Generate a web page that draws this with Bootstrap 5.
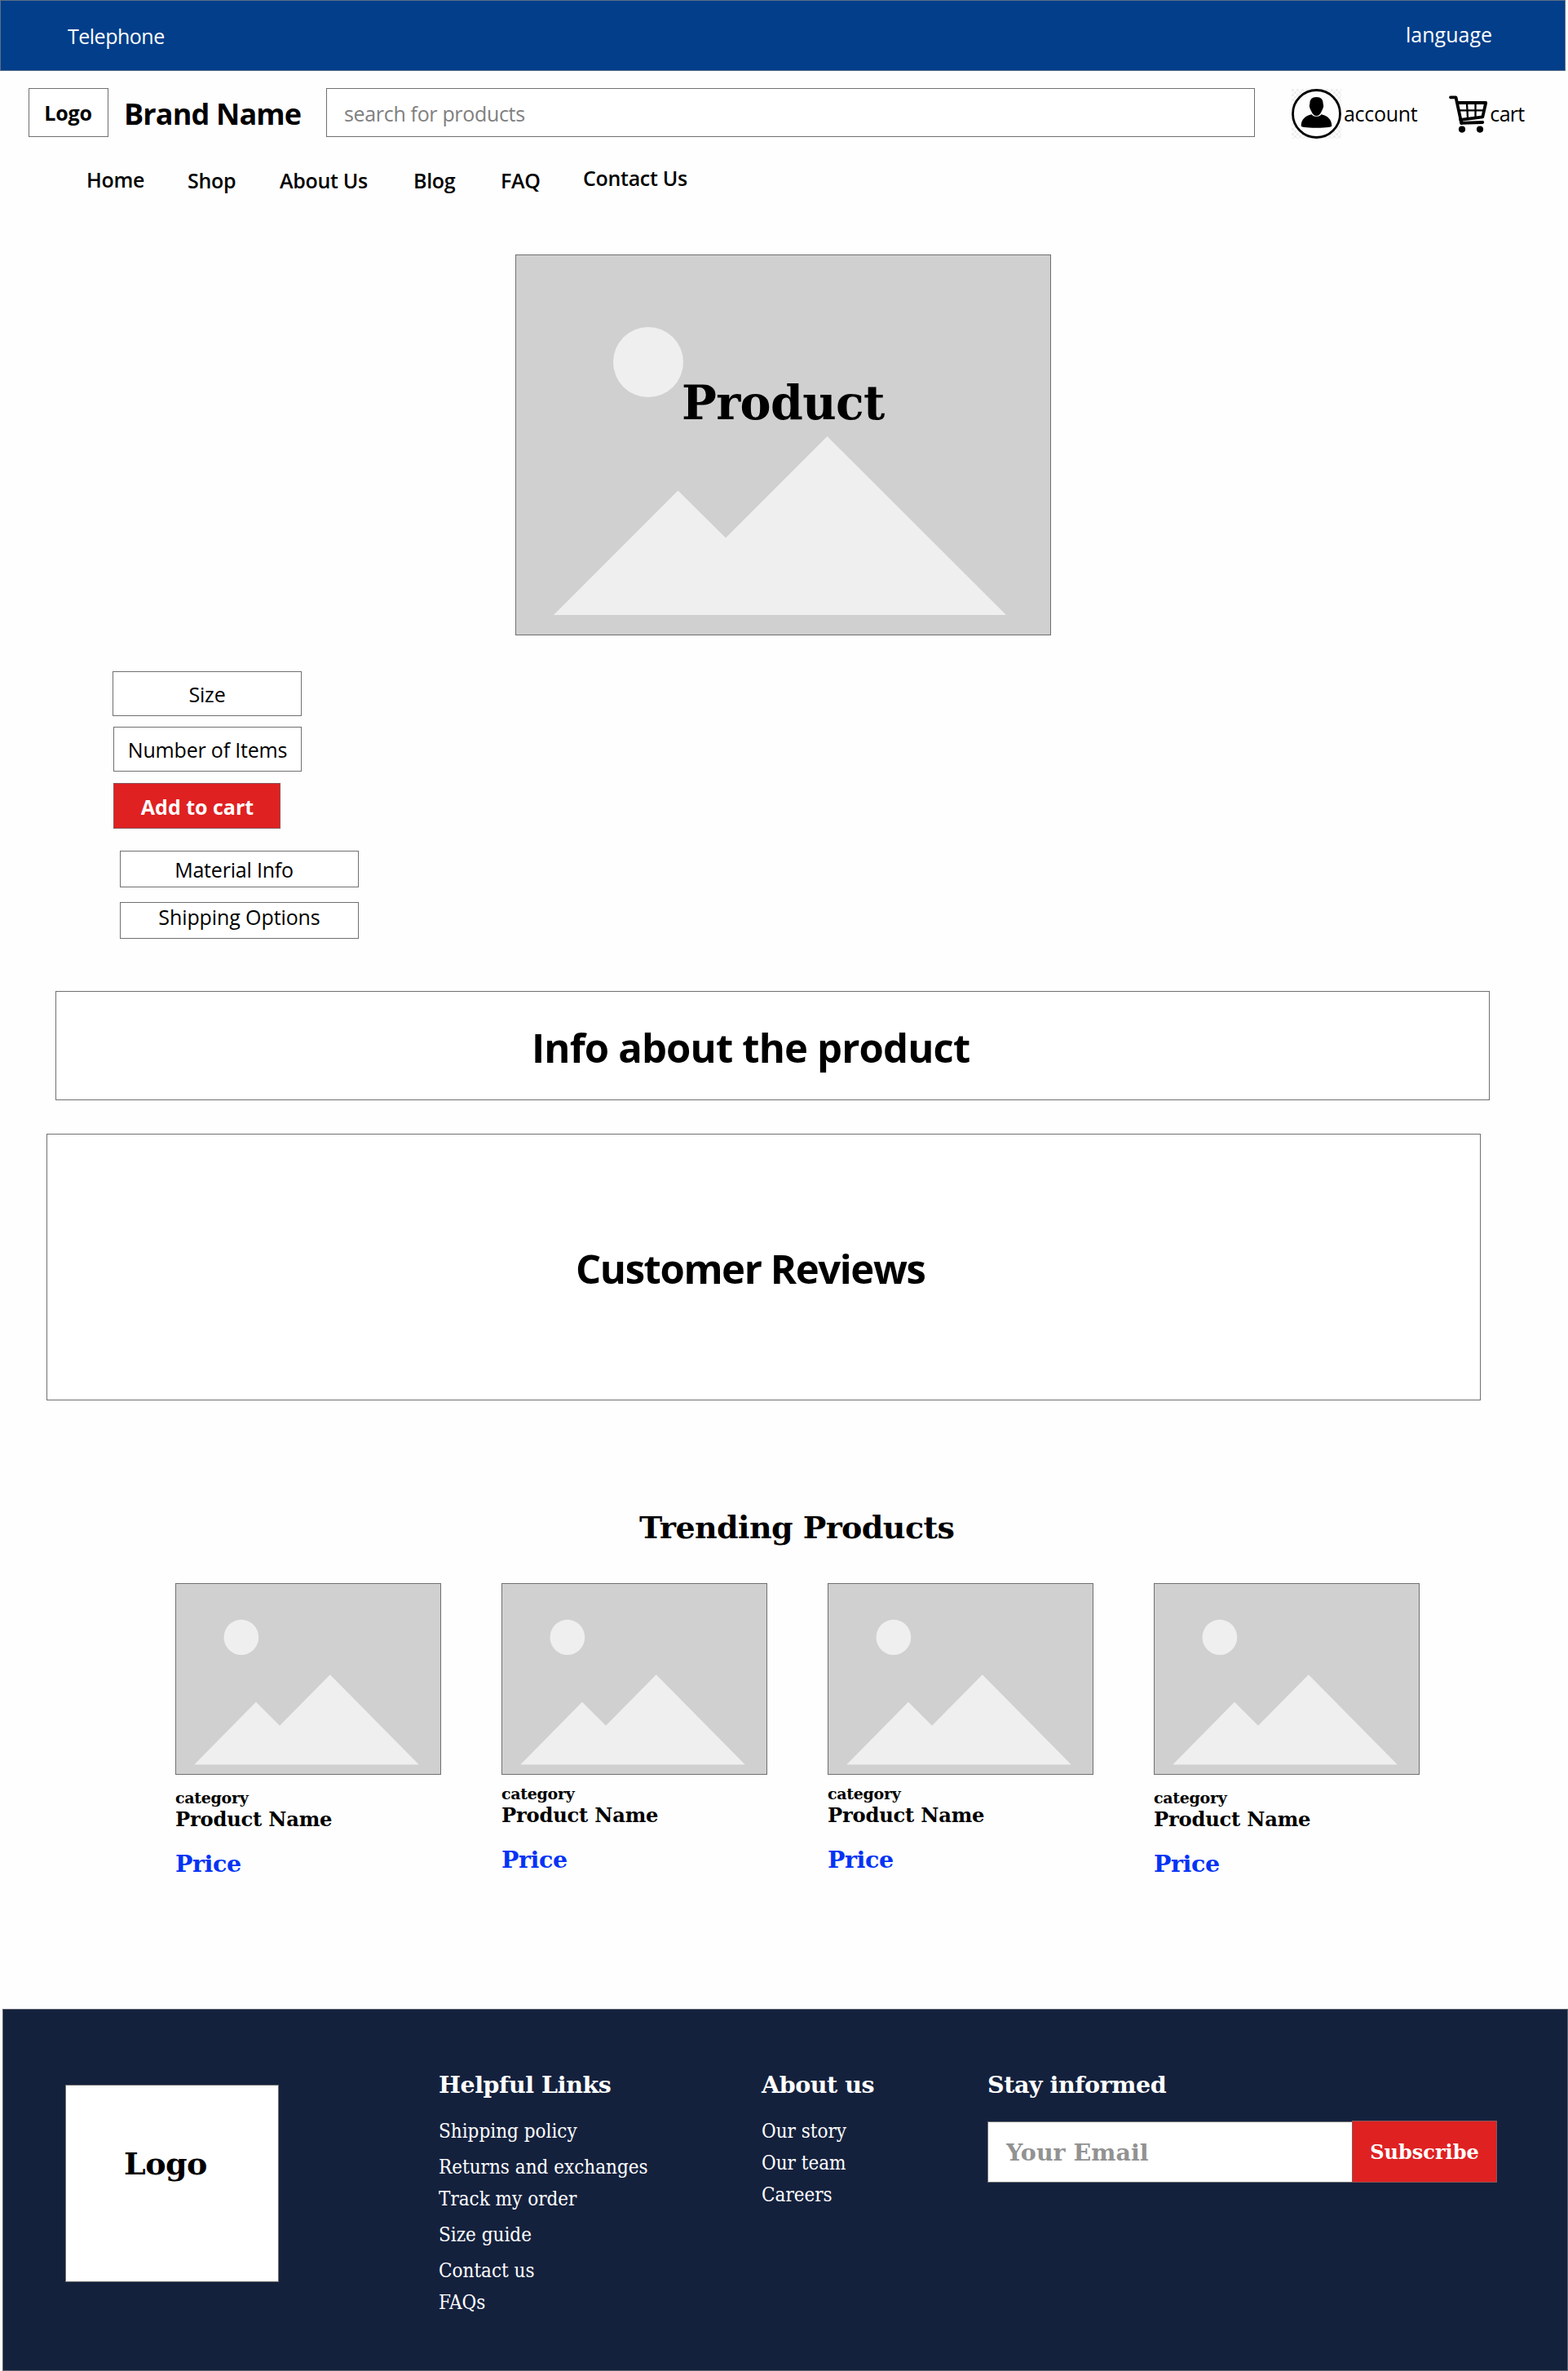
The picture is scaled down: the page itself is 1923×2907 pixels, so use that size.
<!DOCTYPE html>
<html lang="en">
<head>
<meta charset="utf-8">
<meta name="viewport" content="width=device-width, initial-scale=1">
<title>Product page</title>
<link href="https://cdn.jsdelivr.net/npm/bootstrap@5.3.0/dist/css/bootstrap.min.css" rel="stylesheet">
<style>
  :root { --line: #707070; --ui: "Open Sans", "Noto Sans", sans-serif; --display: "DejaVu Serif", Georgia, serif; }
  body { background: #fefefe; color: #000; font: 400 25px/30px var(--ui); letter-spacing: -.2px; white-space: nowrap; overflow-x: hidden; }
  .outlined { border: 1px solid var(--line); background: #fff; }
  .serif { font-family: var(--display); font-weight: 700; letter-spacing: -.015em; }

  .top-strip { width: 1920px; height: 87px; background: #023e8a; border: 1px solid #5b6f86; color: #fff; padding: 26px 89px 0 82px; }
  .top-strip .phone { margin-top: 2px; letter-spacing: -.5px; }
  .top-strip .lang { letter-spacing: 0; }

  .masthead { padding: 21px 0 0 35px; height: 81px; }
  .logo-sm { width: 98px; height: 60px; padding-right: 1px; }
  .brand { width: 267px; padding: 3px 0 0 19px; font-size: 36px; line-height: 40px; letter-spacing: -.85px; }
  .search-field { width: 1139px; height: 60px; padding: 2px 21px 0; color: #707070; font-size: 25px; line-height: 30px; font-family: var(--ui); letter-spacing: -.33px; border-radius: 0; }
  .search-field::placeholder { color: #808080; opacity: 1; }
  .account-link { margin-left: 45px; }
  .account-link svg { margin-top: 3px; }
  .account-link span { margin: 2px 0 0 3px; letter-spacing: -.3px; }
  .cart-link { margin-left: 39px; }
  .cart-link svg { margin-top: 3px; }
  .cart-link span { margin: 2px 0 0 2px; letter-spacing: -.7px; }

  .main-nav { height: 144px; padding: 35px 0 0 106px; display: grid; grid-template-columns: 124px 113px 164px 107px 101px 140px; font-weight: 600; }
  .main-nav a { color: #000; text-decoration: none; margin-top: 3px; letter-spacing: -.3px; }
  .main-nav a:first-child { margin-top: 2px; }
  .main-nav a:last-child { margin-top: 0; }

  .hero-pic { width: 657px; height: 467px; margin-left: 632px; }
  .hero-pic svg, .thumb svg { display: block; width: 100%; height: 100%; }
  .hero-title { top: 150px; left: 204px; font-size: 57px; line-height: 64px; letter-spacing: -.65px; }

  .buy-box { padding: 44px 0 0 138px; }
  .field { height: 55px; width: 232px; padding-top: 1px; display: flex; align-items: center; justify-content: center; }
  .qty { margin: 13px 0 0 1px; width: 231px; }
  .add-btn { margin: 14px 0 0 1px; width: 205px; height: 56px; background: #df2122; border: 1px solid #8a5558; color: #fff; font-weight: 700; letter-spacing: 0; border-radius: 0; padding: 2px 0 0 1px; font-size: 25px; line-height: 30px; }
  .detail { width: 293px; height: 45px; margin-left: 9px; padding-right: 13px; }
  .material { margin-top: 27px; }
  .shipping { margin-top: 18px; padding: 0 0 9px; letter-spacing: -.1px; }

  .panel { width: 1759px; font-weight: 700; font-size: 49px; line-height: 60px; display: flex; align-items: center; }
  .info-panel { margin: 64px 0 0 68px; height: 134px; padding: 4px 0 0 583px; letter-spacing: -.85px; }
  .review-panel { margin: 41px 0 0 57px; height: 327px; padding: 2px 0 0 648px; letter-spacing: -1.4px; }

  .trending { height: 746px; padding-top: 131px; }
  .trending h2 { margin: 0 0 43px 784px; font-size: 38px; line-height: 50px; }
  .product-grid { padding-left: 215px; gap: 74px; }
  .product-item { width: 326px; }
  .thumb { height: 235px; }
  .cat { margin-top: 11px; font-size: 19px; line-height: 24px; }
  .low .cat { margin-top: 16px; }
  .pname { font-size: 24.2px; line-height: 28px; letter-spacing: -.2px; padding-top: 1px; }
  .cost { margin-top: 22px; font-size: 28.5px; line-height: 36px; color: #0433f5; }

  .site-footer { margin-left: 3px; height: 444px; background: #14213d; border: 1px solid #5d636e; color: #fff; }
  .logo-lg { width: 262px; height: 242px; margin: 92px 0 0 76px; padding: 71px 0 0 71px; color: #000; font-size: 38px; line-height: 50px; }
  .site-footer h3 { margin: 74px 0 24px; font-size: 28.5px; line-height: 36px; }
  .links-col { width: 396px; margin-left: 196px; }
  .about-col { width: 277px; }
  .foot-list { font: 400 24px/30px "DejaVu Serif Condensed", "DejaVu Serif", Georgia, serif; font-stretch: condensed; letter-spacing: 0; margin: 0; padding: 0; list-style: none; }
  .foot-list li + li { margin-top: 9px; }
  .foot-list li.gap-lg { margin-top: 14px; }
  .email-field { width: 448px; height: 75px; padding: 0 22px; border-radius: 0; font-size: 28.5px; letter-spacing: 0; }
  .email-field::placeholder { color: #929292; opacity: 1; }
  .sub-btn { width: 178px; height: 76px; margin-left: -1px; padding: 2px 0 0; background: #df2122; border: 1px solid #8a5558; color: #fff; font-size: 24px; line-height: 30px; border-radius: 0; letter-spacing: 0; }
  .signup { margin-top: 26px; }
</style>
</head>
<body>

<!-- Placeholder artwork shared by the hero and the product cards -->
<svg class="d-none" aria-hidden="true">
  <symbol id="placeholder" viewBox="0 0 657 467" preserveAspectRatio="none">
    <rect width="657" height="467" fill="#d0d0d0"/>
    <circle cx="163" cy="132" r="43" fill="#efefef"/>
    <path d="M47 442 199.5 289.5 258 347.5 382.5 223 602 442z" fill="#efefef"/>
    <rect x="0" y="0" width="657" height="467" fill="none" stroke="#707070" stroke-width="2" vector-effect="non-scaling-stroke"/>
  </symbol>
</svg>

<div class="top-strip d-flex justify-content-between align-items-start">
  <span class="phone">Telephone</span>
  <span class="lang">language</span>
</div>

<header>
  <div class="masthead d-flex align-items-center">
    <div class="logo-sm outlined d-flex align-items-center justify-content-center fw-bold">Logo</div>
    <div class="brand fw-bold">Brand Name</div>
    <input class="search-field outlined" type="text" placeholder="search for products" aria-label="Search">
    <div class="account-link d-flex align-items-center">
      <svg width="61" height="61" viewBox="0 0 61 61" role="img" aria-label="Account">
        <defs>
          <pattern id="chk" width="6" height="6" patternUnits="userSpaceOnUse"><path d="M0 0h3v3H0zM3 3h3v3H3z" fill="#efefef"/></pattern>
        </defs>
        <rect width="61" height="61" fill="url(#chk)"/>
        <circle cx="30.5" cy="30.5" r="29" fill="#fdfdfd" stroke="#000" stroke-width="2.8"/>
        <path d="M30.5 10C25 10 22.4 13 22.4 17.500C22.400 19 21.500 19.500 22 22C22.600 25 23.500 25.500 24.500 28C26 31.500 28 33 30.500 33C33 33 35 31.500 36.500 28C37.500 25.500 38.400 25 39 22C39.500 19.500 38.600 19 38.600 17.500C38.600 13 36 10 30.500 10z"/>
        <path d="M24.500 31.200C26.500 34.600 34.500 34.600 36.500 31.200C44 33 49.300 37 49.300 45.500C49.300 46.600 44 47.700 30.500 47.700S11.700 46.600 11.700 45.500C11.700 37 17 33 24.500 31.200z"/>
      </svg>
      <span>account</span>
    </div>
    <div class="cart-link d-flex align-items-center">
      <svg width="48" height="46" viewBox="0 0 48 46" fill="none" stroke="#000" stroke-linejoin="round" stroke-linecap="round" role="img" aria-label="Cart">
        <path d="M2 2.300H8.500L15.300 33.800 41.300 33" stroke-width="3.800"/>
        <path d="M10.500 9H45.200L41.300 26.300 14.500 29.800" stroke-width="3.800"/>
        <path d="M13 18.300H43M22 9.500 23 28M32.500 9.500V26.500" stroke-width="2.300"/>
        <path d="M14.500 29.500 15.500 34" stroke-width="4"/>
        <circle cx="16" cy="41.600" r="4.100" fill="#000" stroke="none"/>
        <circle cx="38" cy="41.600" r="4.100" fill="#000" stroke="none"/>
      </svg>
      <span>cart</span>
    </div>
  </div>

  <nav class="main-nav">
    <a href="#">Home</a>
    <a href="#">Shop</a>
    <a href="#">About Us</a>
    <a href="#">Blog</a>
    <a href="#">FAQ</a>
    <a href="#">Contact Us</a>
  </nav>
</header>

<main>
  <section class="hero-pic position-relative">
    <svg><use href="#placeholder"/></svg>
    <h1 class="hero-title serif position-absolute m-0">Product</h1>
  </section>

  <section class="buy-box">
    <div class="field outlined">Size</div>
    <div class="field outlined qty">Number of Items</div>
    <button class="btn add-btn d-block" type="button">Add to cart</button>
    <div class="field outlined detail material">Material Info</div>
    <div class="field outlined detail shipping">Shipping Options</div>
  </section>

  <section class="panel outlined info-panel">Info about the product</section>
  <section class="panel outlined review-panel">Customer Reviews</section>

  <section class="trending">
    <h2 class="serif">Trending Products</h2>
    <div class="product-grid d-flex">
      <article class="product-item low">
        <div class="thumb"><svg><use href="#placeholder"/></svg></div>
        <div class="cat serif">category</div>
        <div class="pname serif">Product Name</div>
        <div class="cost serif">Price</div>
      </article>
      <article class="product-item">
        <div class="thumb"><svg><use href="#placeholder"/></svg></div>
        <div class="cat serif">category</div>
        <div class="pname serif">Product Name</div>
        <div class="cost serif">Price</div>
      </article>
      <article class="product-item">
        <div class="thumb"><svg><use href="#placeholder"/></svg></div>
        <div class="cat serif">category</div>
        <div class="pname serif">Product Name</div>
        <div class="cost serif">Price</div>
      </article>
      <article class="product-item low">
        <div class="thumb"><svg><use href="#placeholder"/></svg></div>
        <div class="cat serif">category</div>
        <div class="pname serif">Product Name</div>
        <div class="cost serif">Price</div>
      </article>
    </div>
  </section>
</main>

<footer class="site-footer d-flex align-items-start">
  <div class="logo-lg outlined serif">Logo</div>
  <div class="links-col">
    <h3 class="serif">Helpful Links</h3>
    <ul class="foot-list">
      <li>Shipping policy</li>
      <li class="gap-lg">Returns and exchanges</li>
      <li>Track my order</li>
      <li class="gap-lg">Size guide</li>
      <li class="gap-lg">Contact us</li>
      <li>FAQs</li>
    </ul>
  </div>
  <div class="about-col">
    <h3 class="serif">About us</h3>
    <ul class="foot-list">
      <li>Our story</li>
      <li>Our team</li>
      <li>Careers</li>
    </ul>
  </div>
  <div>
    <h3 class="serif mb-0">Stay informed</h3>
    <form class="signup d-flex align-items-end">
      <input class="email-field outlined serif" type="email" placeholder="Your Email" aria-label="Your Email">
      <button class="btn sub-btn serif" type="button">Subscribe</button>
    </form>
  </div>
</footer>

<script src="https://cdn.jsdelivr.net/npm/bootstrap@5.3.0/dist/js/bootstrap.bundle.min.js"></script>
</body>
</html>
